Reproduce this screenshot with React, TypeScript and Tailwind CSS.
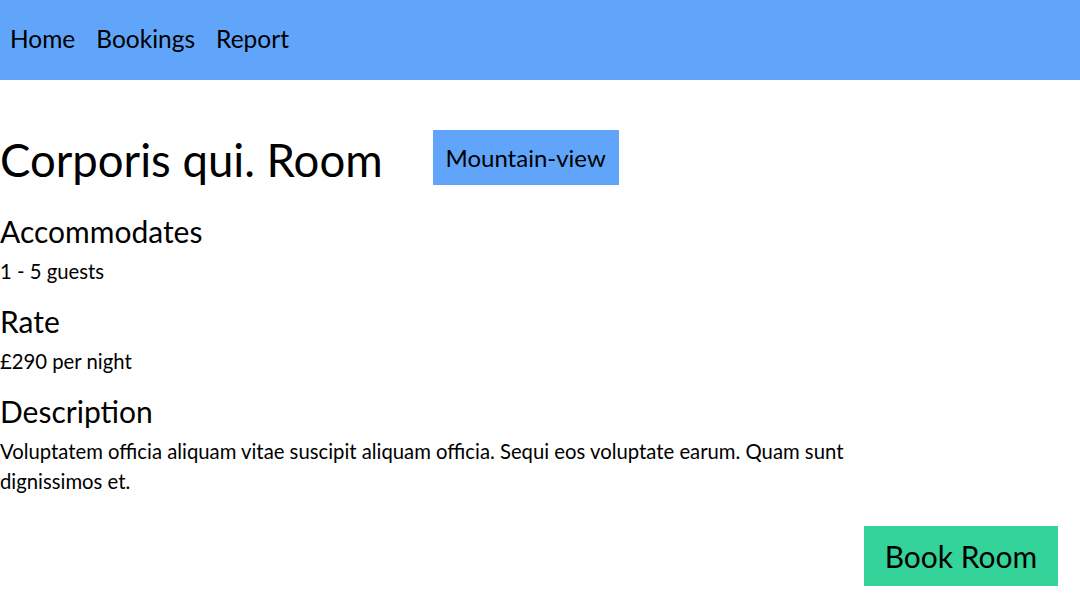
const navLinks = ['Home', 'Bookings', 'Report'];

const room = {
  name: 'Corporis qui.',
  view: 'Mountain-view',
  minGuests: 1,
  maxGuests: 5,
  rate: 290,
  description:
    'Voluptatem officia aliquam vitae suscipit aliquam officia. Sequi eos voluptate earum. Quam sunt dignissimos et.',
};

function Section({ title, children }: { title: string; children: React.ReactNode }) {
  return (
    <div className="mt-[17px] first:mt-0">
      <h2 className="text-[30px] leading-[36px] mb-[7px]">{title}</h2>
      {children}
    </div>
  );
}

export default function App() {
  return (
    <div className="min-h-screen bg-white text-black font-['Lato',sans-serif]">
      <nav className="h-20 bg-[#60a5fa] flex items-center gap-[21px] px-[10px] pb-[2px]">
        {navLinks.map((link) => (
          <a key={link} href="#" className="text-[24.5px] leading-none">
            {link}
          </a>
        ))}
      </nav>

      <main>
        <div className="flex items-start gap-[50px] mt-[50px]">
          <h1 className="text-[45.5px] leading-none mt-[7px]">{room.name} Room</h1>
          <span className="w-[186px] h-[55px] bg-[#60a5fa] flex items-center justify-center text-[24px]">
            {room.view}
          </span>
        </div>

        <div className="mt-[28px]">
          <Section title="Accommodates">
            <p className="text-[20.3px] leading-[30px]">
              {room.minGuests} - {room.maxGuests} guests
            </p>
          </Section>
          <Section title="Rate">
            <p className="text-[20.3px] leading-[30px]">£{room.rate} per night</p>
          </Section>
          <Section title="Description">
            <p className="text-[20.3px] leading-[30px] max-w-[880px]">{room.description}</p>
          </Section>
        </div>

        <div className="flex justify-end mt-[30px] pr-[22px]">
          <button className="w-[194px] h-[60px] bg-[#34d399] text-[30px] flex items-center justify-center">
            Book Room
          </button>
        </div>
      </main>
    </div>
  );
}
